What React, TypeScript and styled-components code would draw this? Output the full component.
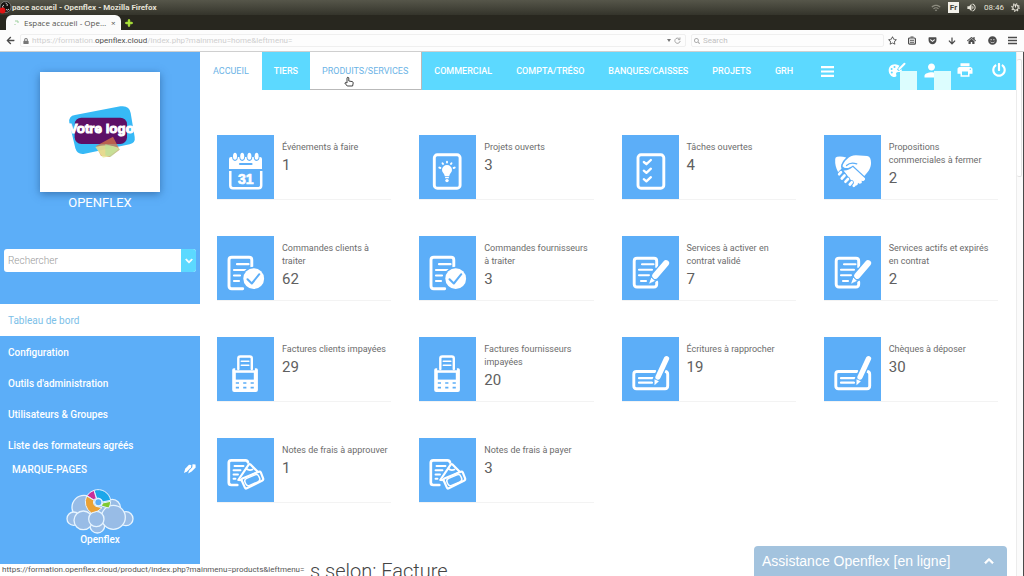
import React from "react";
import styled, { createGlobalStyle, css } from "styled-components";
import { FaPowerOff, FaHome, FaArrowDown, FaLock, FaSearch, FaRegStar, FaSmile, FaGetPocket, FaPlus, FaChevronDown, FaChevronUp, FaArrowLeft } from "react-icons/fa";
import { MdPrint, MdPerson, MdWifi, MdVolumeUp } from "react-icons/md";

const BLUE = "#5caef8";
const CYAN = "#5cd9ff";
const CHROME_FONT = `Roboto, "Noto Sans", sans-serif`;

const Global = createGlobalStyle`
  * { box-sizing: border-box; }
  body { margin: 0; background: #fff; font-family: Roboto, "Liberation Sans", sans-serif; }
  a { color: inherit; text-decoration: none; }
  button { border: 0; padding: 0; margin: 0; background: none; color: inherit; font: inherit; cursor: pointer; }
  ul { list-style: none; margin: 0; padding: 0; }
  h1, h2, p { margin: 0; font-weight: 400; }
  svg { display: block; flex: none; }
`;

const Browser = styled.div`
  display: flex;
  flex-direction: column;
  height: 100vh;
  overflow: hidden;
  position: relative;
`;

/* Window chrome */
const TitleBar = styled.header`
  display: flex;
  align-items: center;
  height: 15px;
  flex: none;
  padding-right: 4px;
  background: linear-gradient(#56564a, #34342b);
  color: #e6e3d8;
  font: 700 8px/12px ${CHROME_FONT};
`;
const TitleText = styled.span`
  flex: 1;
`;
const Tray = styled.div`
  display: flex;
  align-items: center;
  gap: 7px;
  font-weight: 400;
`;
const Lang = styled.span`
  background: #f3f1ea;
  color: #45453c;
  font-weight: 700;
  line-height: 11px;
  padding: 0 2px;
`;
const TabStrip = styled.div`
  display: flex;
  align-items: center;
  height: 15px;
  flex: none;
  padding-left: 6px;
  gap: 4px;
  background: #28271f;
`;
const Tab = styled.div`
  display: flex;
  align-items: center;
  gap: 5px;
  width: 115px;
  height: 15px;
  padding: 0 6px 0 8px;
  border-radius: 6px 6px 0 0;
  background: #fbfbfb;
  color: #55554f;
  font: 400 8px/14px "Open Sans", "Noto Sans", sans-serif;
`;
const TabName = styled.span`
  flex: 1;
  white-space: nowrap;
`;
const Toolbar = styled.div`
  display: flex;
  align-items: center;
  flex: none;
  height: 22px;
  padding: 0 7px 0 6px;
  background: #fdfdfd;
  border-bottom: 1px solid #cfcfcf;
  color: #4c4c4c;
`;
const Address = styled.label`
  display: flex;
  align-items: center;
  flex: 1;
  gap: 3px;
  height: 13px;
  margin-left: 5px;
  padding: 0 4px 0 2px;
  border: 1px solid #efefef;
  border-radius: 2px;
  color: #cfcfcf;
  font: 400 8px/11px ${CHROME_FONT};
`;
const Url = styled.span`
  flex: 1;
  b { color: #4e4e4e; font-weight: 400; }
`;
const SearchField = styled(Address)`
  flex: 0 0 193px;
  input {
    width: 100%;
    border: 0;
    padding: 0;
    outline: 0;
    background: none;
    font: inherit;
    &::placeholder { color: #c2c2c2; opacity: 1; }
  }
`;
const ToolIcons = styled.div`
  display: flex;
  align-items: center;
  justify-content: space-between;
  width: 129px;
  margin-left: 4px;
`;

/* Page frame */
const Page = styled.div`
  display: flex;
  flex: 1;
  min-height: 0;
`;
const Sidebar = styled.aside`
  display: flex;
  flex-direction: column;
  flex: 0 0 200px;
  padding-top: 20px;
  background: ${BLUE};
  color: #fff;
`;
const LogoCard = styled.div`
  align-self: center;
  width: 120px;
  height: 120px;
  background: #fff;
  box-shadow: 0 2px 8px rgba(20, 60, 110, 0.5);
`;
const Company = styled.h1`
  margin-top: 4px;
  text-align: center;
  font-size: 13px;
  font-weight: 400;
  line-height: 14px;
`;
const SideSearch = styled.form`
  display: flex;
  height: 23px;
  margin: 39px 4px 32px;
  border-radius: 3px;
  overflow: hidden;
  background: #fff;
  input {
    flex: 1;
    min-width: 0;
    border: 0;
    padding: 0 4px;
    outline: 0;
    background: none;
    font: 300 10px/20px Roboto, sans-serif;
    &::placeholder { color: #999; opacity: 1; }
  }
  button {
    display: flex;
    align-items: center;
    justify-content: center;
    width: 15px;
    background: ${CYAN};
  }
`;
const SideLink = styled.a<{ $active?: boolean }>`
  display: block;
  height: 31px;
  padding-left: 8px;
  font-size: 10px;
  font-weight: 500;
  line-height: 31px;
  ${(p) =>
    p.$active &&
    css`
      height: 32px;
      margin-bottom: 1px;
      background: #fff;
      color: #7cc0e8;
      font-weight: 400;
      line-height: 33px;
    `}
`;
const Bookmarks = styled.div`
  display: flex;
  align-items: center;
  justify-content: space-between;
  height: 16px;
  padding: 0 4px 0 12px;
  font-size: 10px;
  font-weight: 500;
`;
const Brand = styled.div`
  display: flex;
  flex-direction: column;
  align-items: center;
  margin-top: 11px;
  font-size: 10px;
  font-weight: 500;
  line-height: 12px;
`;

const Main = styled.main`
  flex: 1;
  min-width: 0;
  overflow: hidden;
`;
const Nav = styled.nav`
  display: flex;
  height: 38px;
  background: ${CYAN};
  color: #fff;
`;
const NavLink = styled.a<{ $light?: boolean; $hover?: boolean }>`
  position: relative;
  display: flex;
  align-items: center;
  padding: 0 12px;
  font-size: 9px;
  font-weight: 500;
  ${(p) =>
    p.$light &&
    css`
      padding: 0 13px;
      background: #fff;
      color: #6cb4e6;
      font-weight: 400;
    `}
  ${(p) => p.$hover && css`padding: 0 14px 0 12px; box-shadow: inset -1px -1px 0 #b9b9b9;`}
`;
const MenuButton = styled.button`
  padding: 0 16px;
`;
const Pointer = styled.svg`
  position: absolute;
  left: 34px;
  top: 24px;
`;
const NavTools = styled.div`
  display: flex;
  gap: 16px;
  margin-left: auto;
  padding-right: 8px;
`;
const NavTool = styled.button`
  position: relative;
  display: flex;
  align-items: center;
  justify-content: center;
  width: 18px;
  height: 36px;
`;
const Badge = styled.span`
  position: absolute;
  left: 12px;
  top: 19px;
  width: 17px;
  height: 19px;
  background: #dcfdfe;
`;
const Tiles = styled.ul`
  display: grid;
  grid-template-columns: repeat(4, minmax(0, 1fr));
  gap: 37px 28px;
  padding: 45px 18px 0 17px;
`;
const Tile = styled.a`
  display: flex;
  height: 64px;
  box-shadow: 0 1px 0 #f3f3f3;
`;
const TileIcon = styled.span`
  flex: 0 0 57px;
  height: 64px;
  background: ${BLUE};
`;
const TileText = styled.span`
  display: flex;
  flex-direction: column;
  min-width: 0;
  padding: 6px 0 0 8px;
  color: #6c6c6c;
`;
const TileLabel = styled.span`
  font-size: 9px;
  line-height: 13px;
`;
const TileCount = styled.span`
  margin-top: 1px;
  color: #606060;
  font-size: 15px;
  line-height: 20px;
`;
const Section = styled.h2`
  margin-top: 58px;
  padding-left: 110px;
  color: #444;
  font-size: 20px;
  font-weight: 300;
  line-height: 22px;
`;
const Scroll = styled.div`
  flex: 0 0 8px;
  border-left: 1px solid #ececec;
  border-right: 1px solid #4a4a4a;
  background: #fbfbfb;
`;
const Thumb = styled.div`
  height: 118px;
  margin: 7px 1px 0 0;
  border: 1px solid #e2e2e2;
  border-left: 0;
  border-radius: 2px;
  background: #fff;
`;
const Status = styled.div`
  position: absolute;
  left: 0;
  bottom: 0;
  padding: 0 2px;
  background: #fff;
  color: #555;
  font: 400 8px/12px ${CHROME_FONT};
`;
const Assist = styled.button`
  position: absolute;
  right: 17px;
  bottom: 0;
  display: flex;
  align-items: center;
  justify-content: space-between;
  width: 253px;
  height: 30px;
  padding: 0 13px 0 8px;
  border-radius: 4px 4px 0 0;
  background: #a3c3de;
  color: #fff;
  font: 400 14px/20px "Liberation Sans", sans-serif;
`;

/* Tile drawings: all share a 57x64 field */
const Art = ({ children }: { children: React.ReactNode }) => (
  <svg width="57" height="64" viewBox="0 0 57 64" fill="none" stroke="#fff" strokeWidth="2.9" strokeLinecap="round" strokeLinejoin="round" aria-hidden="true">
    {children}
  </svg>
);

const Calendar = () => (
  <Art>
    <path d="M12 34V24q0-2 2-2h29q2 0 2 2v10z" fill="#fff" stroke="none" />
    {[18, 25.2, 32.4, 39.6].map((x) => (
      <g key={x}>
        <ellipse cx={x} cy="21.5" rx="2.9" ry="4.4" fill={BLUE} stroke="none" />
        <ellipse cx={x} cy="21.3" rx="2" ry="3.500" fill="#fff" stroke="none" />
      </g>
    ))}
    <path d="M23 29h11.500" stroke={BLUE} strokeWidth="2.2" />
    <path d="M13.300 36V50.500q0 2.700 2.700 2.700h25.500q2.700 0 2.700-2.700V36" strokeLinecap="butt" strokeWidth="2.500" />
    <text x="28.700" y="48.600" textAnchor="middle" fill="#fff" stroke="#fff" strokeWidth=".7" fontFamily="Liberation Sans, sans-serif" fontWeight="700" fontSize="14">31</text>
  </Art>
);
const Idea = () => (
  <Art>
    <rect x="15.300" y="19.800" width="25.800" height="33.400" rx="3" />
    <path d="M28 30a5 5 0 0 1 5 5c0 2.600-2.600 3.500-2.800 6.200h-4.400c-.2-2.700-2.800-3.600-2.800-6.200a5 5 0 0 1 5-5z" fill="#fff" stroke="none" />
    <path d="M26.600 42.700h2.800" strokeWidth="1.200" />
    <circle cx="28" cy="45.600" r="1.700" fill="#fff" stroke="none" />
    <path d="M28 26.700v.8M23.500 28.200l.5.700M32.500 28.200l-.5.700M20.300 32.600l1.100.4M35.700 32.600l-1.100.4" strokeWidth="1.900" />
  </Art>
);
const Tasks = () => (
  <Art>
    <rect x="16" y="19.800" width="25.800" height="33.400" rx="3" />
    <path d="M21.800 27l2.600 2.200 4.500-4.200M21.800 35.700l2.600 2.200 4.500-4.200M21.800 44.200l2.600 2.200 4.500-4.200" strokeWidth="2.300" />
  </Art>
);
const Handshake = () => (
  <Art>
    <path d="M11.200 24q0-2 2-2.300 4-.9 9 .9-3.800 3.500-5 7.200-.5 2 .3 3.600l-3.200 4q-3.600-6-3.100-13.400z" fill="#fff" stroke="none" />
    <path d="M18.500 31.200c1-4.200 6.500-11 13.500-10.900l11.200.6q2.300.2 3.100 2.600c1.800 5.600.3 11-4.700 16l-1.300 1.500L29 30.500c-3 2.500-8 4-10.500.7z" fill="#fff" stroke="none" />
    <path d="M19.500 35.500c4 .3 6.300-1.300 9.300-3.500l12.200 11.200q.5 1.700-1.100 2.500-1.300.6-2.200-.3.700 2.500-1.200 3.200-1.400.5-2.500-.9.200 2.300-1.500 2.700-1.500.2-2.500-1.500z" fill="#fff" stroke="none" />
    <path d="M22.500 30.500q4-3.800 10.300-1.600" stroke={BLUE} strokeWidth="1.200" />
    <path d="M17 37.200l-1.800 2M20.500 40.500l-2.700 3M24 44l-2.500 2.700M27.700 47.300l-1.900 2.200" stroke={BLUE} strokeWidth="4.300" />
    <path d="M17 37.200l-1.800 2M20.500 40.500l-2.700 3M24 44l-2.500 2.700M27.700 47.300l-1.900 2.200M30.500 50l-.7.700" strokeWidth="2.700" />
  </Art>
);
const OrderCheck = () => (
  <Art>
    <path d="M34.800 30.500V24q0-2.700-2.700-2.700H14.700Q12 21.300 12 24v26q0 2.700 2.700 2.700h11" />
    <path d="M20 28.200h11.500M17 34h12M17 39.500h6M17 45h5" strokeWidth="2.200" />
    <circle cx="36.700" cy="42.700" r="12" fill={BLUE} stroke="none" />
    <circle cx="36.700" cy="42.700" r="10.400" fill="#fff" stroke="none" />
    <path d="M30.500 43.200l4.300 4.300 7.500-9.300" stroke={BLUE} strokeWidth="2" />
  </Art>
);
const Contract = () => (
  <Art>
    <path d="M34.700 31v-6q0-2.700-2.700-2.700H15q-2.800 0-2.800 2.700v23.300Q12.200 51 15 51h17q2.700 0 2.700-2.700V46" />
    <path d="M20 28.300h11.500M17 33.800h13M17 39.300h10M19 45h5" strokeWidth="2.100" />
    <path d="M44.500 26.500L31.500 42" stroke={BLUE} strokeWidth="8.800" />
    <path d="M44 27.200L33.300 39.800" strokeWidth="6.200" />
    <path d="M29.300 41.300l4.300 3.700-7 3.200z" fill="#fff" stroke={BLUE} strokeWidth=".8" />
  </Art>
);
const Terminal = () => (
  <Art>
    <path d="M21.300 32V21.500q0-2 2-2h9.500q2 0 2 2V32" strokeWidth="2.400" />
    <path d="M24.300 24.200h7.500M24.300 28.200h7.500" strokeWidth="1.600" />
    <path d="M15.200 33q0-1.700 1.700-1.700h1.300v1.900h19.700v-1.900h1.300q1.700 0 1.700 1.700v20q0 2-2 2H17.200q-2 0-2-2z" fill="#fff" stroke="none" />
    <path d="M18.800 35.800h18v6.800h-18z" fill={BLUE} stroke="none" />
    <path d="M18.800 46h3.200M26.200 46h3.200M33.600 46h3.200M18.800 50.700h3.200M26.200 50.700h3.200M33.600 50.700h3.200" stroke={BLUE} strokeWidth="1.700" strokeLinecap="butt" />
  </Art>
);
const Cheque = () => (
  <Art>
    <path d="M33 34.500H14.500q-2.700 0-2.700 2.700V49q0 2.700 2.700 2.700H43q2.700 0 2.700-2.700V37.200q0-2.200-2-2.700" />
    <path d="M17 41.200h14M17 45.700h13" strokeWidth="2.200" />
    <path d="M44.500 21.500L34.500 43" stroke={BLUE} strokeWidth="8" />
    <path d="M44.500 21.700L36 40" strokeWidth="5.300" />
    <path d="M32.500 42.200l4.400 2-4.400 4z" fill="#fff" stroke="none" />
  </Art>
);
const Expense = () => (
  <Art>
    <path d="M31 24.300q-.5-2-2.500-2H14.300q-2.500 0-2.500 2.500v19.700q0 2.500 2.500 2.500h6" strokeWidth="2.700" />
    <path d="M17.500 28h9M16.500 32.300h7M16.500 36.500h4.500M16.500 40.800h2" strokeWidth="1.900" />
    <path d="M21.300 42L31.500 26.800q.8-1 2-.3l7.500 7.600-16 8z" fill={BLUE} strokeWidth="2.200" />
    <path d="M29 30.500q3 2.500 6.500 1" strokeWidth="1.700" />
    <path d="M24.600 42.300q-.4-1.200.8-1.800l16.500-6.800q1.300-.5 1.900.7l2.400 6.300q.3 1.200-.8 1.800L29.800 50.300q-1.300.6-1.900-.7z" fill={BLUE} strokeWidth="2.200" />
    <rect x="27.800" y="38.300" width="15" height="7.600" rx="3" transform="rotate(-23 35.300 42.100)" strokeWidth="1.500" />
  </Art>
);

const CompanyLogo = () => (
  <svg width="120" height="120" viewBox="0 0 360 360" role="img" aria-label="Votre logo">
    <path d="M88 152q-3-20 17-23l136-26q27-4 31 20l12 72q3 18-15 22l-135 28q-22 4-28-16z" fill="#37b9f6" />
    <rect x="104" y="137" width="157" height="79" rx="20" fill="#5d1066" />
    <path d="M168 222l51-28 20 39-30 22-26-3z" fill="#d87a48" opacity=".75" />
    <path d="M166 225q40-12 72 5l-30 23-19 4z" fill="#e8ef9a" opacity=".75" />
    <path d="M196 216l44 15-28 24-16-5z" fill="#b2e29c" opacity=".6" />
    <text x="184" y="182" textAnchor="middle" fill="#fff" stroke="#fff" strokeWidth="3" fontFamily="Liberation Sans Narrow, Liberation Sans, sans-serif" fontWeight="700" fontSize="40">Votre logo</text>
  </svg>
);

const CloudLogo = () => (
  <svg width="68" height="46" viewBox="196 564 204 138" stroke="#e6f4ff" strokeWidth="4" aria-hidden="true">
    <g fill="#98bce6">
      <circle cx="250" cy="622" r="36" />
      <circle cx="335" cy="622" r="24" />
      <circle cx="219" cy="656" r="20" />
      <circle cx="376" cy="656" r="21" />
      <circle cx="290" cy="677" r="22" />
      <circle cx="293" cy="607" r="38" stroke="none" />
      <circle cx="248" cy="661" r="28" />
      <circle cx="338" cy="652" r="36" />
      <circle cx="287" cy="657" r="23" />
    </g>
    <g strokeWidth="3">
      <path d="M280 571a38 38 0 0 1 50 30l-25 5a13 13 0 0 0-17-11z" fill="#1ca7ea" />
      <path d="M280 571l7 25-9 3-19-12a38 38 0 0 1 21-16z" fill="#c8309a" />
      <path d="M258 588l22 13a13 13 0 0 0 6 18l18 4-12 10-20 6a40 40 0 0 1-14-51z" fill="#eba236" />
      <path d="M330 604l-24 5-4 9 22 6q6-8 6-20z" fill="#7fc832" />
    </g>
    <circle cx="293" cy="607" r="11" fill={BLUE} strokeWidth="4" />
  </svg>
);

const Bars = ({ size, weight }: { size: number; weight: number }) => (
  <svg width={size} height={size} viewBox="0 0 12 12" stroke="currentColor" strokeWidth={weight} aria-hidden="true">
    <path d="M0 2h12M0 6h12M0 10h12" />
  </svg>
);
const Palette = () => (
  <svg width="18" height="16" viewBox="0 0 18 16" aria-hidden="true">
    <path d="M7 2.200C3 2.200.7 5 .7 8.400S3.300 15 6.500 15c2 0 2.200-1.300 1.700-2.500-.5-1.400.3-2.400 2-2.400h2c1.500 0 1.800-1.500 1.500-2.800L10.500 9 9 7.500l2.500-3.800A8 8 0 0 0 7 2.200z" fill="#fff" />
    <path d="M16.500 1.800L11.300 7" stroke="#fff" strokeWidth="2" strokeLinecap="round" />
    <g fill={CYAN}><circle cx="3.600" cy="7" r="1" /><circle cx="6.500" cy="5" r="1" /><circle cx="3.800" cy="10.400" r="1" /></g>
  </svg>
);
const Tags = () => (
  <svg width="12" height="10" viewBox="0 0 12 10" fill="#fff" aria-hidden="true">
    <path d="M0 9L1.200 4.700 5 .8l2.300.1L7 3.600 3 7.500z" />
    <path d="M4.200 9.500L5 6.800 8.300 3.300 8.500.3l3 .2.200 3-4 4z" />
  </svg>
);
const Gear = () => (
  <svg width="9" height="9" viewBox="0 0 10 10" fill="none" stroke="currentColor" aria-hidden="true">
    <circle cx="5" cy="5" r="3" strokeWidth="1.200" />
    <circle cx="5" cy="5" r="4.200" strokeWidth="1.200" strokeDasharray="1.500 1.800" />
    <path d="M5 2v3" strokeWidth="1.200" />
  </svg>
);
const Recorder = () => (
  <svg width="12" height="13" viewBox="0 0 12 13" aria-hidden="true">
    <circle cx="5.500" cy="6" r="5.500" fill="#16130f" stroke="#aaa" strokeWidth=".6" />
    <path d="M5.500 2a2 2 0 0 1 1.500 3M9 8a2 2 0 0 1-3 .5M3 7a2 2 0 0 1 1-3" fill="none" stroke="#ccc" />
    <circle cx="2.500" cy="9.500" r="3" fill="#e01414" />
  </svg>
);
const Clipboard = () => (
  <svg width="8" height="9" viewBox="0 0 8 9" fill="none" stroke="currentColor" aria-hidden="true">
    <rect x=".6" y="2" width="6.800" height="6.200" rx="1" strokeWidth="1.200" />
    <path d="M2.500 1h3M2 4.200h4M2 6.200h4" strokeWidth="1.100" />
  </svg>
);

const sideLinks = ["Tableau de bord", "Configuration", "Outils d'administration", "Utilisateurs & Groupes", "Liste des formateurs agréés"];
const navLinks = ["ACCUEIL", "TIERS", "PRODUITS/SERVICES", "COMMERCIAL", "COMPTA/TRÉSO", "BANQUES/CAISSES", "PROJETS", "GRH"];
const tiles: { label: string; count: number; Icon: React.ComponentType }[] = [
  { label: "Événements à faire", count: 1, Icon: Calendar },
  { label: "Projets ouverts", count: 3, Icon: Idea },
  { label: "Tâches ouvertes", count: 4, Icon: Tasks },
  { label: "Propositions commerciales à fermer", count: 2, Icon: Handshake },
  { label: "Commandes clients à traiter", count: 62, Icon: OrderCheck },
  { label: "Commandes fournisseurs à traiter", count: 3, Icon: OrderCheck },
  { label: "Services à activer en contrat validé", count: 7, Icon: Contract },
  { label: "Services actifs et expirés en contrat", count: 2, Icon: Contract },
  { label: "Factures clients impayées", count: 29, Icon: Terminal },
  { label: "Factures fournisseurs impayées", count: 20, Icon: Terminal },
  { label: "Écritures à rapprocher", count: 19, Icon: Cheque },
  { label: "Chèques à déposer", count: 30, Icon: Cheque },
  { label: "Notes de frais à approuver", count: 1, Icon: Expense },
  { label: "Notes de frais à payer", count: 3, Icon: Expense },
];

export default function App() {
  return (
    <Browser>
      <Global />
      <TitleBar>
        <Recorder />
        <TitleText>pace accueil - Openflex - Mozilla Firefox</TitleText>
        <Tray>
          <MdWifi size={10} color="#8d8c80" />
          <Lang>Fr</Lang>
          <MdVolumeUp size={11} />
          <span>08:46</span>
          <Gear />
        </Tray>
      </TitleBar>
      <TabStrip>
        <Tab>
          <svg width="5" height="6" viewBox="0 0 5 6" fill="none" stroke="#9ccf9c"><path d="M1 1h3v2M1 4v1" /></svg>
          <TabName>Espace accueil - Ope…</TabName>
          <button aria-label="Fermer l'onglet">×</button>
        </Tab>
        <button aria-label="Nouvel onglet"><FaPlus size={8} color="#b4f03c" stroke="#b4f03c" strokeWidth="50" /></button>
      </TabStrip>
      <Toolbar>
        <button aria-label="Précédent"><FaArrowLeft size={9} /></button>
        <Address as="div">
          <FaLock size={6} color="#777" />
          <Url>https://formation.<b>openflex.cloud</b>/index.php?mainmenu=home&amp;leftmenu=</Url>
          <svg width="4" height="3" viewBox="0 0 4 3" fill="#777"><path d="M0 0h4L2 3z" /></svg>
          <svg width="7" height="7" viewBox="0 0 8 8" fill="none" stroke="#999"><path d="M7 4.500A3 3 0 1 1 6 2M6.800.5V3H4.500" /></svg>
        </Address>
        <SearchField>
          <FaSearch size={6} color="#aaa" />
          <input aria-label="Search" placeholder="Search" />
        </SearchField>
        <ToolIcons>
          <FaRegStar size={9} />
          <Clipboard />
          <FaGetPocket size={9} />
          <FaArrowDown size={8} />
          <FaHome size={9} />
          <FaSmile size={9} />
          <Bars size={9} weight={2} />
        </ToolIcons>
      </Toolbar>

      <Page>
        <Sidebar>
          <LogoCard><CompanyLogo /></LogoCard>
          <Company>OPENFLEX</Company>
          <SideSearch onSubmit={(e) => e.preventDefault()}>
            <input aria-label="Rechercher" placeholder="Rechercher" />
            <button type="button" aria-label="Choisir la recherche"><FaChevronDown size={8} stroke="#fff" strokeWidth="40" /></button>
          </SideSearch>
          <ul>
            {sideLinks.map((name, i) => (
              <li key={name}><SideLink href="#" $active={i === 0}>{name}</SideLink></li>
            ))}
          </ul>
          <Bookmarks><span>MARQUE-PAGES</span><Tags /></Bookmarks>
          <Brand><CloudLogo /><span>Openflex</span></Brand>
        </Sidebar>

        <Main>
          <Nav>
            {navLinks.map((name, i) => (
              <NavLink key={name} href="#" $light={i === 0 || i === 2} $hover={i === 2}>
                {name}
                {i === 2 && (
                  <Pointer width="10" height="12" viewBox="0 0 10 12" fill="#fff" stroke="#444" strokeLinejoin="round">
                    <path d="M3 6V1.800q.9-1.200 1.800 0V5l3.500.6q1 .3.9 1.400L8.600 10H3.200L.8 7q.7-1.200 2.200 0z" />
                  </Pointer>
                )}
              </NavLink>
            ))}
            <MenuButton aria-label="Plus"><Bars size={13} weight={2} /></MenuButton>
            <NavTools>
              <NavTool aria-label="Thème"><Palette /><Badge /></NavTool>
              <NavTool aria-label="Utilisateur"><MdPerson size={21} /><Badge /></NavTool>
              <NavTool aria-label="Imprimer"><MdPrint size={18} /></NavTool>
              <NavTool aria-label="Déconnexion"><FaPowerOff size={14} /></NavTool>
            </NavTools>
          </Nav>
          <Tiles>
            {tiles.map(({ label, count, Icon }) => (
              <li key={label}>
                <Tile href="#">
                  <TileIcon><Icon /></TileIcon>
                  <TileText>
                    <TileLabel>{label}</TileLabel>
                    <TileCount>{count}</TileCount>
                  </TileText>
                </Tile>
              </li>
            ))}
          </Tiles>
          <Section>s selon: Facture</Section>
        </Main>
        <Scroll><Thumb /></Scroll>
      </Page>
      <Status>https://formation.openflex.cloud/product/index.php?mainmenu=products&amp;leftmenu=</Status>
      <Assist>Assistance Openflex [en ligne]<FaChevronUp size={10} stroke="#fff" strokeWidth="40" /></Assist>
    </Browser>
  );
}
